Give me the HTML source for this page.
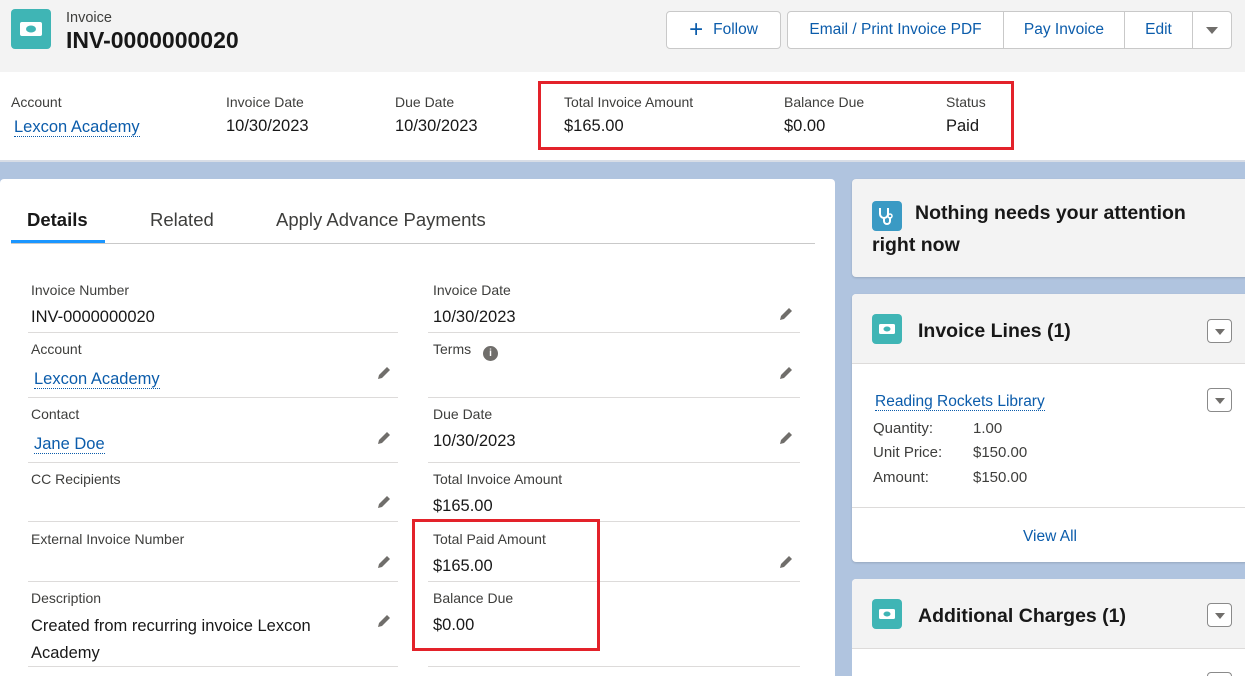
<!DOCTYPE html>
<html style="overflow:hidden;width:1245px;height:676px"><head><style>
*{margin:0;padding:0;box-sizing:border-box}
body{width:1245px;height:676px;overflow:hidden;background:#b0c4df;font-family:"Liberation Sans",sans-serif;color:#181818;position:relative}
.a{position:absolute;white-space:nowrap}
.lbl{font-size:14px;color:#3e3e3c}
.val{font-size:16.5px;color:#181818}
.lnk{color:#0b5cab;border-bottom:1px dotted #0b5cab}
.ln{position:absolute;height:1px;background:#dddbda}
.icon{position:absolute;background:#3fb5b5;border-radius:4px}
.pen{position:absolute;width:18px;height:18px}
.btn{position:absolute;top:11px;height:38px;border:1px solid #c9c9c9;background:#fff;color:#0b5cab;font-size:15.5px;display:flex;align-items:center;justify-content:center}
.dd{position:absolute;width:25px;height:24px;border:1px solid #8a8a8a;border-radius:4px;background:#fff}
.dd:after{content:"";position:absolute;left:7px;top:9px;border-left:5px solid transparent;border-right:5px solid transparent;border-top:6px solid #706e6b}
.red{position:absolute;border:3px solid #e3222a}
</style></head><body>
<div class="a" style="left:0;top:0;width:1245px;height:72px;background:#f3f3f3"></div>
<div class="icon" style="left:11px;top:9px;width:40px;height:40px"><svg width="40" height="40"><rect x="9" y="13" width="22" height="14" rx="2" fill="#fff"/><ellipse cx="20" cy="20" rx="5" ry="3.5" fill="#3fb5b5"/></svg></div>
<div class="a" style="left:66px;top:10px;font-size:14.5px;color:#3e3e3c">Invoice</div>
<div class="a" style="left:66px;top:27px;font-size:23px;font-weight:bold">INV-0000000020</div>
<div class="btn" style="left:666px;width:115px;border-radius:4px"><span style="font-size:24px;margin-right:10px;font-weight:300">+</span>Follow</div>
<div class="btn" style="left:787px;width:217px;border-radius:4px 0 0 4px">Email / Print Invoice PDF</div>
<div class="btn" style="left:1003px;width:122px;border-left:1px solid #c9c9c9">Pay Invoice</div>
<div class="btn" style="left:1124px;width:69px">Edit</div>
<div class="btn" style="left:1192px;width:40px;border-radius:0 4px 4px 0"><span style="border-left:6px solid transparent;border-right:6px solid transparent;border-top:7px solid #706e6b"></span></div>
<div class="a" style="left:0;top:72px;width:1245px;height:90px;background:#fff;border-bottom:2px solid #d8dde6"></div>
<div class="a lbl" style="left:11px;top:94px">Account</div>
<div class="a val" style="left:14px;top:118px"><span class="lnk">Lexcon Academy</span></div>
<div class="a lbl" style="left:226px;top:94px">Invoice Date</div>
<div class="a val" style="left:226px;top:117px">10/30/2023</div>
<div class="a lbl" style="left:395px;top:94px">Due Date</div>
<div class="a val" style="left:395px;top:117px">10/30/2023</div>
<div class="a lbl" style="left:564px;top:94px">Total Invoice Amount</div>
<div class="a val" style="left:564px;top:117px">$165.00</div>
<div class="a lbl" style="left:784px;top:94px">Balance Due</div>
<div class="a val" style="left:784px;top:117px">$0.00</div>
<div class="a lbl" style="left:946px;top:94px">Status</div>
<div class="a val" style="left:946px;top:117px">Paid</div>
<div class="red" style="left:538px;top:81px;width:476px;height:69px"></div>

<div class="a" style="left:0;top:179px;width:835px;height:497px;background:#fff;border-radius:4px 4px 0 0"></div>
<div class="a" style="left:27px;top:209px;font-size:18.5px;font-weight:bold">Details</div>
<div class="a" style="left:11px;top:240px;width:94px;height:3px;background:#1b96ff"></div>
<div class="a" style="left:150px;top:209px;font-size:18.5px;color:#3e3e3c">Related</div>
<div class="a" style="left:276px;top:209px;font-size:18.5px;color:#3e3e3c">Apply Advance Payments</div>
<div class="ln" style="left:11px;top:243px;width:804px;background:#c9c9c9"></div>

<div class="a lbl" style="left:31px;top:282px">Invoice Number</div>
<div class="a val" style="left:31px;top:308px">INV-0000000020</div>
<div class="ln" style="left:28px;top:332px;width:370px"></div>
<div class="a lbl" style="left:31px;top:341px">Account</div>
<div class="a val" style="left:34px;top:370px"><span class="lnk">Lexcon Academy</span></div>
<div class="ln" style="left:28px;top:397px;width:370px"></div>
<div class="a lbl" style="left:31px;top:406px">Contact</div>
<div class="a val" style="left:34px;top:435px"><span class="lnk">Jane Doe</span></div>
<div class="ln" style="left:28px;top:462px;width:370px"></div>
<div class="a lbl" style="left:31px;top:471px">CC Recipients</div>
<div class="ln" style="left:28px;top:521px;width:370px"></div>
<div class="a lbl" style="left:31px;top:531px">External Invoice Number</div>
<div class="ln" style="left:28px;top:581px;width:370px"></div>
<div class="a lbl" style="left:31px;top:590px">Description</div>
<div class="a val" style="left:31px;top:613px;line-height:27px">Created from recurring invoice Lexcon<br>Academy</div>
<div class="ln" style="left:28px;top:666px;width:370px"></div>

<div class="a lbl" style="left:433px;top:282px">Invoice Date</div>
<div class="a val" style="left:433px;top:308px">10/30/2023</div>
<div class="ln" style="left:428px;top:332px;width:372px"></div>
<div class="a lbl" style="left:433px;top:341px">Terms <span style="display:inline-block;width:15px;height:15px;border-radius:50%;background:#706e6b;color:#fff;font-size:10px;text-align:center;line-height:15px;font-weight:bold;margin-left:8px;vertical-align:-2px">i</span></div>
<div class="ln" style="left:428px;top:397px;width:372px"></div>
<div class="a lbl" style="left:433px;top:406px">Due Date</div>
<div class="a val" style="left:433px;top:432px">10/30/2023</div>
<div class="ln" style="left:428px;top:462px;width:372px"></div>
<div class="a lbl" style="left:433px;top:471px">Total Invoice Amount</div>
<div class="a val" style="left:433px;top:497px">$165.00</div>
<div class="ln" style="left:428px;top:521px;width:372px"></div>
<div class="a lbl" style="left:433px;top:531px">Total Paid Amount</div>
<div class="a val" style="left:433px;top:557px">$165.00</div>
<div class="ln" style="left:428px;top:581px;width:372px"></div>
<div class="a lbl" style="left:433px;top:590px">Balance Due</div>
<div class="a val" style="left:433px;top:616px">$0.00</div>
<div class="ln" style="left:428px;top:666px;width:372px"></div>
<div class="red" style="left:412px;top:519px;width:188px;height:132px"></div>

<svg class="pen" style="left:375px;top:364px" viewBox="0 0 18 18"><path d="M3 15 L4 11 L12 3 L15 6 L7 14 Z" fill="#706e6b"/></svg>
<svg class="pen" style="left:375px;top:429px" viewBox="0 0 18 18"><path d="M3 15 L4 11 L12 3 L15 6 L7 14 Z" fill="#706e6b"/></svg>
<svg class="pen" style="left:375px;top:493px" viewBox="0 0 18 18"><path d="M3 15 L4 11 L12 3 L15 6 L7 14 Z" fill="#706e6b"/></svg>
<svg class="pen" style="left:375px;top:553px" viewBox="0 0 18 18"><path d="M3 15 L4 11 L12 3 L15 6 L7 14 Z" fill="#706e6b"/></svg>
<svg class="pen" style="left:375px;top:612px" viewBox="0 0 18 18"><path d="M3 15 L4 11 L12 3 L15 6 L7 14 Z" fill="#706e6b"/></svg>
<svg class="pen" style="left:777px;top:305px" viewBox="0 0 18 18"><path d="M3 15 L4 11 L12 3 L15 6 L7 14 Z" fill="#706e6b"/></svg>
<svg class="pen" style="left:777px;top:364px" viewBox="0 0 18 18"><path d="M3 15 L4 11 L12 3 L15 6 L7 14 Z" fill="#706e6b"/></svg>
<svg class="pen" style="left:777px;top:429px" viewBox="0 0 18 18"><path d="M3 15 L4 11 L12 3 L15 6 L7 14 Z" fill="#706e6b"/></svg>
<svg class="pen" style="left:777px;top:553px" viewBox="0 0 18 18"><path d="M3 15 L4 11 L12 3 L15 6 L7 14 Z" fill="#706e6b"/></svg>

<div class="a" style="left:852px;top:179px;width:400px;height:98px;background:#f3f3f3;border-radius:4px;box-shadow:0 1px 2px rgba(0,0,0,.15)"></div>
<div class="a" style="left:872px;top:201px;width:30px;height:30px;background:#3a9ac4;border-radius:4px"><svg width="30" height="30"><path d="M8 7 v6 a4 4 0 0 0 8 0 v-6 M12 17 v3 a3 3 0 0 0 6 0 v-4" stroke="#fff" stroke-width="2" fill="none"/><circle cx="18" cy="15" r="2" fill="none" stroke="#fff" stroke-width="1.5"/></svg></div>
<div class="a" style="left:915px;top:202px;font-size:19.5px;font-weight:bold">Nothing needs your attention</div>
<div class="a" style="left:872px;top:234px;font-size:19.5px;font-weight:bold">right now</div>

<div class="a" style="left:852px;top:294px;width:400px;height:268px;background:#fff;border-radius:4px;box-shadow:0 1px 2px rgba(0,0,0,.15)"></div>
<div class="a" style="left:852px;top:294px;width:400px;height:70px;background:#f3f3f3;border-bottom:1px solid #dddbda;border-radius:4px 4px 0 0"></div>
<div class="icon" style="left:872px;top:314px;width:30px;height:30px"><svg width="30" height="30"><rect x="7" y="10" width="16" height="10" rx="1.5" fill="#fff"/><ellipse cx="15" cy="15" rx="3.5" ry="2.5" fill="#3fb5b5"/></svg></div>
<div class="a" style="left:918px;top:320px;font-size:19.5px;font-weight:bold">Invoice Lines (1)</div>
<div class="dd" style="left:1207px;top:319px"></div>
<div class="a" style="left:875px;top:393px;font-size:15.5px"><span class="lnk">Reading Rockets Library</span></div>
<div class="dd" style="left:1207px;top:388px"></div>
<div class="a" style="left:873px;top:420px;font-size:15px;color:#3e3e3c">Quantity:</div><div class="a" style="left:973px;top:420px;font-size:15px;color:#3e3e3c">1.00</div>
<div class="a" style="left:873px;top:444px;font-size:15px;color:#3e3e3c">Unit Price:</div><div class="a" style="left:973px;top:444px;font-size:15px;color:#3e3e3c">$150.00</div>
<div class="a" style="left:873px;top:469px;font-size:15px;color:#3e3e3c">Amount:</div><div class="a" style="left:973px;top:469px;font-size:15px;color:#3e3e3c">$150.00</div>
<div class="ln" style="left:852px;top:507px;width:393px"></div>
<div class="a" style="left:1023px;top:528px;font-size:15.5px;color:#0b5cab">View All</div>

<div class="a" style="left:852px;top:579px;width:393px;height:97px;background:#fff;border-radius:4px 0 0 0"></div>
<div class="a" style="left:852px;top:579px;width:393px;height:70px;background:#f3f3f3;border-bottom:1px solid #dddbda;border-radius:4px 0 0 0"></div>
<div class="icon" style="left:872px;top:599px;width:30px;height:30px"><svg width="30" height="30"><rect x="7" y="10" width="16" height="10" rx="1.5" fill="#fff"/><ellipse cx="15" cy="15" rx="3.5" ry="2.5" fill="#3fb5b5"/></svg></div>
<div class="a" style="left:918px;top:605px;font-size:19.5px;font-weight:bold">Additional Charges (1)</div>
<div class="dd" style="left:1207px;top:603px"></div>
<div class="a" style="left:1207px;top:672px;width:25px;height:4px;border:1px solid #8a8a8a;border-bottom:none;border-radius:4px 4px 0 0;background:#fff"></div>
</body></html>
